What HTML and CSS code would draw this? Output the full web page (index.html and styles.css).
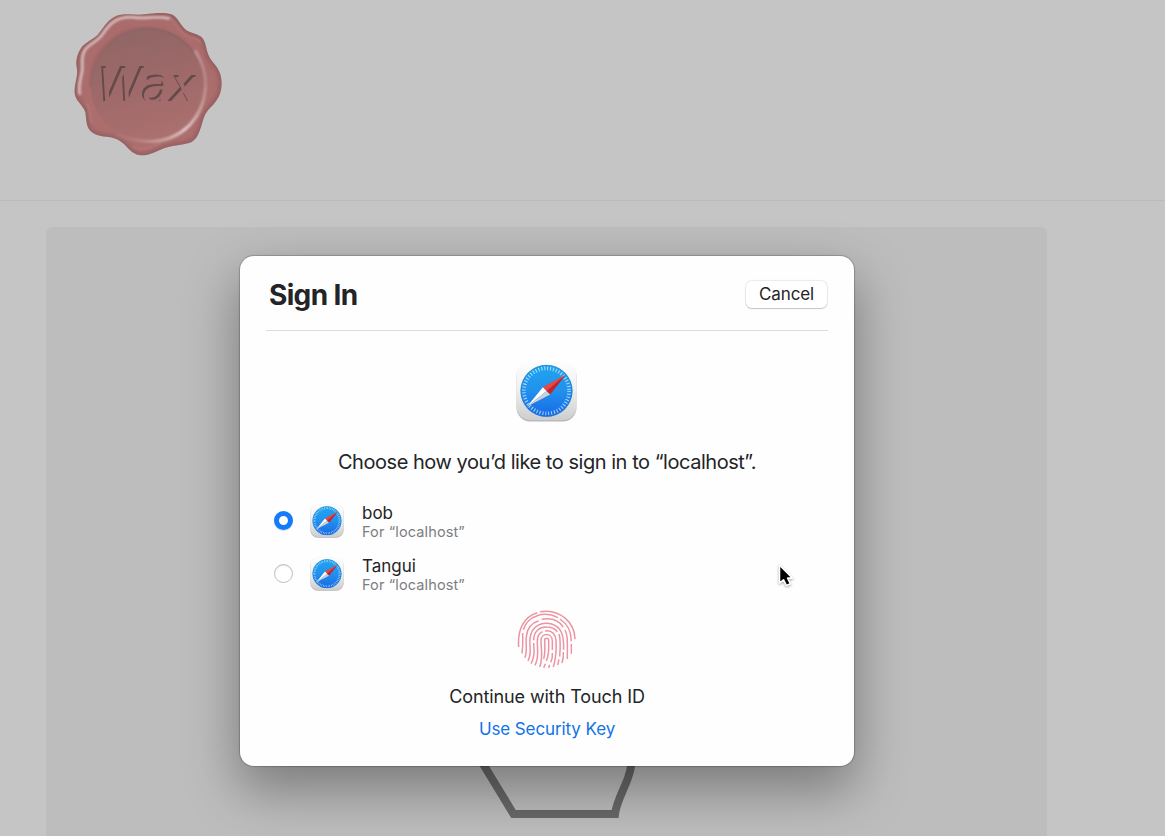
FILE: index.html
```html
<!DOCTYPE html>
<html lang="en">
<head>
<meta charset="utf-8">
<title>Wax</title>
<link rel="stylesheet" href="styles.css">
</head>
<body>
<svg class="defs" aria-hidden="true">
  <defs>
    <linearGradient id="tile" x2="0" y2="1"><stop offset="0" stop-color="#fdfdfd"/><stop offset=".45" stop-color="#f1f1f1"/><stop offset="1" stop-color="#cdcdcd"/></linearGradient>
    <linearGradient id="dial" x2="0" y2="1"><stop offset="0" stop-color="#20a5f0"/><stop offset=".5" stop-color="#2191ed"/><stop offset="1" stop-color="#1769e6"/></linearGradient>
  </defs>
  <symbol id="compass" viewBox="0 0 100 100">
    <rect x="1" y="2" width="98" height="97" rx="22" fill="#b5b5b5"/>
    <rect x="1" y="1" width="98" height="96" rx="22" fill="url(#tile)"/>
    <circle cx="50" cy="49" r="42.5" fill="url(#dial)"/>
    <circle cx="50" cy="49" r="42" fill="none" stroke="#1b79c4" stroke-width="1"/>
    <circle cx="50" cy="49" r="37" fill="none" stroke="#d6edff" stroke-width="6" stroke-dasharray="1.6 3.243" opacity=".8"/>
    <path d="M22 75 54 55 80 25Z" fill="#174d91" opacity=".45"/>
    <path d="M82 22 44 43 50 49Z" fill="#f0443d"/>
    <path d="M82 22 50 49 56 55Z" fill="#c82227"/>
    <path d="M18 75 44 43 50 49Z" fill="#fff"/>
    <path d="M18 75 50 49 56 55Z" fill="#c9d0d7"/>
  </symbol>
</svg>

<header class="site-header">
  <svg class="seal" viewBox="0 0 540 510" role="img" aria-label="Wax">
    <defs>
      <linearGradient id="rim" x2="0" y2="1"><stop offset="0" stop-color="#aa6b6b"/><stop offset="1" stop-color="#ad6e6e"/></linearGradient>
      <linearGradient id="well" x1=".35" y1="0" x2=".6" y2="1"><stop offset="0" stop-color="#906666"/><stop offset=".5" stop-color="#9f6969"/><stop offset="1" stop-color="#ac7070"/></linearGradient>
      <linearGradient id="gloss" x1="1" x2="0" y2=".15"><stop offset="0" stop-color="#ddbaba" stop-opacity=".3"/><stop offset=".35" stop-color="#e1cccc"/><stop offset="1" stop-color="#d5aaaa" stop-opacity=".15"/></linearGradient>
      <filter id="soft"><feGaussianBlur stdDeviation="2.8"/></filter>
      <filter id="edge"><feGaussianBlur stdDeviation="6"/></filter>
      <filter id="engrave" x="-10%" y="-10%" width="120%" height="120%">
        <feOffset in="SourceAlpha" dx="7" dy="6" result="shift"/>
        <feComposite in="SourceGraphic" in2="shift" operator="out"/>
        <feGaussianBlur stdDeviation="2"/>
      </filter>
      <path id="wax" d="M170 47C204 38 222 47 254 43C284 40 309 36 334 43C355 51 360 76 379 91C398 103 424 101 433 124C441 145 440 163 456 183C475 205 485 222 485 250C485 279 474 301 453 321C431 342 431 357 423 381C415 405 408 421 390 428C365 436 340 435 316 443C290 453 269 467 242 466C212 462 203 438 183 425C157 404 125 416 99 399C76 384 80 360 76 337C69 314 46 304 44 280C42 252 54 232 51 207C45 180 53 158 67 139C83 122 107 115 118 98C134 78 145 57 170 47Z"/>
      <clipPath id="waxclip"><use href="#wax"/></clipPath>
    </defs>
    <use href="#wax" fill="url(#rim)"/>
    <g clip-path="url(#waxclip)">
      <use href="#wax" fill="none" stroke="#714c4c" stroke-width="12" opacity=".5" filter="url(#edge)"/>
      <path d="M327 55C285 46 252 58 222 52C168 48 147 74 129 101C114 126 84 132 74 152C60 173 71 199 65 221C60 242 55 260 59 281" fill="none" stroke="#d9c0c0" stroke-width="8" stroke-linecap="round" filter="url(#soft)"/>
      <path d="M326 52C347 64 352 87 374 104C393 119 418 112 422 130M78 310C94 324 85 348 97 371M217 441C247 457 281 438 302 427" fill="none" stroke="#c08989" stroke-width="4" opacity=".7" filter="url(#soft)"/>
    </g>
    <circle cx="263" cy="255" r="171" fill="url(#well)"/>
    <path d="M91 261C85 159 168 82 263 83C356 86 433 162 434 256" fill="none" stroke="#805959" stroke-width="5" opacity=".45" filter="url(#soft)"/>
    <path d="M407 155C453 229 443 315 391 373C330 435 254 435 173 405" fill="none" stroke="url(#gloss)" stroke-width="9" stroke-linecap="round" filter="url(#soft)"/>
    <text class="seal-text" x="110" y="302" textLength="298" lengthAdjust="spacingAndGlyphs" filter="url(#engrave)">Wax</text>
  </svg>
</header>

<main class="stage">
  <svg class="outline" viewBox="0 0 200 96" aria-hidden="true">
    <path d="M17 14 53.500 74H155C156 63 164 49 168 38Q172 27 172 14" fill="none" stroke="#686868" stroke-width="8"/>
  </svg>
</main>

<section class="dialog" role="dialog" aria-labelledby="title">
  <div class="dialog-head">
    <h1 id="title">Sign In</h1>
    <button class="cancel" type="button">Cancel</button>
  </div>
  <svg class="app-icon"><use href="#compass"/></svg>
  <p class="prompt">Choose how you’d like to sign in to “localhost”.</p>
  <ul class="accounts">
    <li class="account">
      <span class="radio radio-on"></span>
      <svg class="mini-icon"><use href="#compass"/></svg>
      <div><div class="name">bob</div><div class="site">For “localhost”</div></div>
    </li>
    <li class="account">
      <span class="radio"></span>
      <svg class="mini-icon"><use href="#compass"/></svg>
      <div><div class="name">Tangui</div><div class="site">For “localhost”</div></div>
    </li>
  </ul>
  <svg class="touch" viewBox="37 31 177 177" aria-hidden="true">
    <g fill="none" stroke="#ec94a3" stroke-width="4.500">
      <path d="M42 142C38 91 57 51 98 39M106 36C166 26 210 68 211 119"/>
      <path d="M54 100C53 112 57 126 52 161M56 90C69 47 119 33 160 54M166 58C190 74 200 97 200 125M200 133V162"/>
      <path d="M61 174C69 151 62 131 65 111C67 86 80 70 102 63M111 59C140 53 163 63 176 82M181 91C190 107 188 128 188 178"/>
      <path d="M70 184C83 159 73 137 76 116C80 78 113 65 141 73C169 82 178 104 177 150M176 157C177 171 175 180 172 190"/>
      <path d="M79 192C94 166 87 148 87 130M87 122C87 94 106 81 126 82C142 82 151 87 158 96M163 103C169 122 166 158 165 171M163 179 159 196"/>
      <path d="M91 197C105 169 97 148 98 125C98 107 106 99 114 96M121 94C144 91 153 106 154 123C156 154 155 172 146 202"/>
      <path d="M105 202C116 176 109 149 109 123C109 99 143 98 143 124V151M143 160C144 171 142 181 138 188M135 195 132 205"/>
      <path d="M117 204 122 192M125 184C135 160 132 140 132 122C132 114 120 114 120 122C121 146 122 161 117 178"/>
    </g>
  </svg>
  <p class="continue">Continue with Touch ID</p>
  <a class="security">Use Security Key</a>
</section>

<svg class="pointer" viewBox="0 0 22 32" aria-hidden="true">
  <path d="M3 2V24L8 20 11.500 27 16.500 25 13 18H19Z" fill="#000" stroke="#fff" stroke-width="2" stroke-linejoin="round"/>
</svg>
</body>
</html>
```

FILE: styles.css
```css
* { box-sizing: border-box; }
body {
  margin: 0;
  height: 836px;
  overflow: hidden;
  position: relative;
  display: flex;
  flex-direction: column;
  background: #c5c5c5;
  color: #242426;
  font-family: Inter, "Liberation Sans", sans-serif;
}
p, h1, ul { margin: 0; padding: 0; }
.defs { position: absolute; width: 0; height: 0; }

.site-header {
  flex: none;
  height: 201px;
  padding-left: 60px;
  border-bottom: 1px solid #bababa;
}
.seal { display: block; width: 180px; height: 170px; }
.seal-text {
  font: italic 143px "DejaVu Sans", sans-serif;
  fill: #634b4b;
}

.stage {
  flex: 1;
  width: 1001px;
  margin: 26px 0 0 46px;
  border-radius: 6px 6px 0 0;
  background: #bdbdbd;
  display: flex;
  align-items: flex-end;
  padding-left: 414px;
}
.outline { display: block; width: 200px; height: 96px; }

.dialog {
  position: absolute;
  left: 240px;
  top: 256px;
  width: 614px;
  height: 510px;
  padding: 0 26px;
  border-radius: 14px;
  background: #fefefe;
  box-shadow: 0 0 1px 1px rgba(0,0,0,.2), 0 22px 52px 2px rgba(0,0,0,.35);
  display: flex;
  flex-direction: column;
  align-items: center;
}
.dialog-head {
  width: 562px;
  height: 75px;
  flex: none;
  border-bottom: 1px solid #dcdcdc;
  display: flex;
  justify-content: space-between;
  align-items: center;
  padding: 2px 0 0 3px;
}
h1 {
  font-size: 28px;
  font-weight: 700;
  line-height: 36px;
  letter-spacing: -.65px;
  padding-top: 2px;
}
.cancel {
  width: 81px;
  height: 27px;
  margin-right: 1px;
  padding: 0 0 1px;
  border: 0;
  border-radius: 6px;
  background: #fff;
  box-shadow: 0 0 1px 1px rgba(0,0,0,.08), 0 1px 1px rgba(0,0,0,.16);
  color: #242426;
  font: 17px Inter, sans-serif;
  letter-spacing: -.1px;
}
.app-icon { flex: none; width: 61px; height: 61px; margin: 30px 1px 0 0; }
.prompt {
  margin-top: 27px;
  font-size: 20px;
  line-height: 26px;
  letter-spacing: -.46px;
  white-space: nowrap;
}
.accounts {
  align-self: stretch;
  margin-top: 19px;
  list-style: none;
}
.account {
  height: 53px;
  display: flex;
  align-items: center;
  padding-left: 8px;
}
.radio {
  width: 19px;
  height: 19px;
  border: 1px solid #bfbfbf;
  border-radius: 50%;
  background: #fff;
  box-shadow: inset 0 1px 1px rgba(0,0,0,.1);
}
.radio-on {
  border: 5px solid #147cfa;
  box-shadow: 0 1px 1px rgba(20,100,220,.2);
}
.mini-icon { width: 34px; height: 34px; margin: 0 18px 0 17px; }
.name { font-size: 17px; line-height: 20px; padding-top: 3px; }
.site { font-size: 14.500px; line-height: 18px; color: #7d7d7f; letter-spacing: .13px; }
.touch { flex: none; width: 59px; height: 59px; margin: 10px 1px 0 0; }
.continue { margin-top: 16px; font-size: 18px; line-height: 24px; letter-spacing: -.1px; }
.security { margin-top: 9px; font-size: 17px; line-height: 22px; letter-spacing: -.1px; color: #1272e8; }

.pointer {
  position: absolute;
  left: 777px;
  top: 563px;
  width: 18px;
  height: 27px;
  filter: drop-shadow(0 1px 1px rgba(0,0,0,.35));
}
```
